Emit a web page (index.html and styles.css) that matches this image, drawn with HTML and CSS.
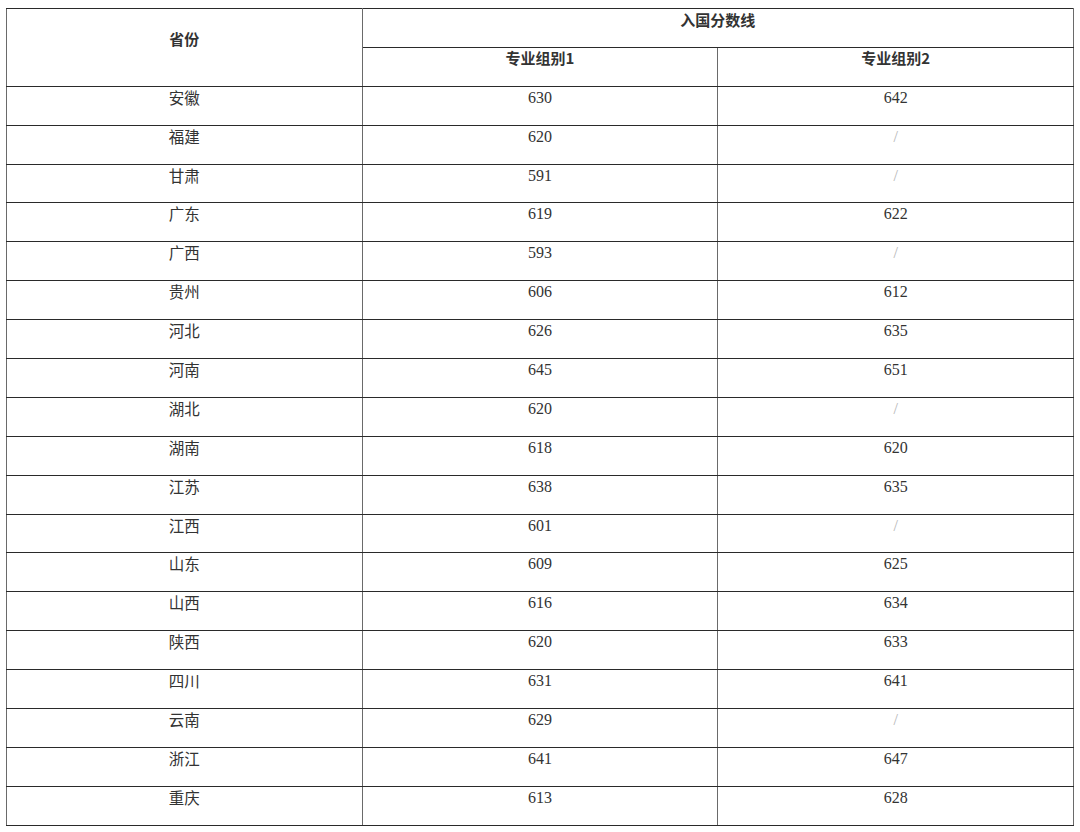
FILE: index.html
```html
<!DOCTYPE html>
<html lang="zh">
<head>
<meta charset="utf-8">
<title>入国分数线</title>
<link rel="stylesheet" href="styles.css">
</head>
<body>
<table class="score-table">
  <colgroup><col class="c1"><col class="c2"><col class="c3"></colgroup>
  <thead>
    <tr>
      <th rowspan="2" class="prov-head"><p>省份</p></th>
      <th colspan="2" class="group-head"><p>入国分数线</p></th>
    </tr>
    <tr>
      <th class="sub-head"><p>专业组别1</p></th>
      <th class="sub-head"><p>专业组别2</p></th>
    </tr>
  </thead>
  <tbody>
    <tr><td class="prov"><p>安徽</p></td><td><p>630</p></td><td><p>642</p></td></tr>
    <tr><td class="prov"><p>福建</p></td><td><p>620</p></td><td><p class="none">/</p></td></tr>
    <tr><td class="prov"><p>甘肃</p></td><td><p>591</p></td><td><p class="none">/</p></td></tr>
    <tr><td class="prov"><p>广东</p></td><td><p>619</p></td><td><p>622</p></td></tr>
    <tr><td class="prov"><p>广西</p></td><td><p>593</p></td><td><p class="none">/</p></td></tr>
    <tr><td class="prov"><p>贵州</p></td><td><p>606</p></td><td><p>612</p></td></tr>
    <tr><td class="prov"><p>河北</p></td><td><p>626</p></td><td><p>635</p></td></tr>
    <tr><td class="prov"><p>河南</p></td><td><p>645</p></td><td><p>651</p></td></tr>
    <tr><td class="prov"><p>湖北</p></td><td><p>620</p></td><td><p class="none">/</p></td></tr>
    <tr><td class="prov"><p>湖南</p></td><td><p>618</p></td><td><p>620</p></td></tr>
    <tr><td class="prov"><p>江苏</p></td><td><p>638</p></td><td><p>635</p></td></tr>
    <tr><td class="prov"><p>江西</p></td><td><p>601</p></td><td><p class="none">/</p></td></tr>
    <tr><td class="prov"><p>山东</p></td><td><p>609</p></td><td><p>625</p></td></tr>
    <tr><td class="prov"><p>山西</p></td><td><p>616</p></td><td><p>634</p></td></tr>
    <tr><td class="prov"><p>陕西</p></td><td><p>620</p></td><td><p>633</p></td></tr>
    <tr><td class="prov"><p>四川</p></td><td><p>631</p></td><td><p>641</p></td></tr>
    <tr><td class="prov"><p>云南</p></td><td><p>629</p></td><td><p class="none">/</p></td></tr>
    <tr><td class="prov"><p>浙江</p></td><td><p>641</p></td><td><p>647</p></td></tr>
    <tr><td class="prov"><p>重庆</p></td><td><p>613</p></td><td><p>628</p></td></tr>
  </tbody>
</table>
</body>
</html>
```

FILE: styles.css
```css
html, body {
  margin: 0;
  padding: 0;
  background: #ffffff;
}

body {
  padding: 8px 0 0 6px;
  font-family: "Liberation Serif", "Noto Sans CJK SC", serif;
  color: #333333;
}

.score-table {
  width: 1068px;
  border-collapse: collapse;
  table-layout: fixed;
  border: 1px solid #111111;
}

.c1, .c2, .c3 {
  width: 33.333%;
}

.score-table th,
.score-table td {
  padding: 0;
  text-align: center;
  vertical-align: top;
  border-top: 1px solid #2a2a2a;
  border-bottom: 1px solid #2a2a2a;
  border-left: 1px solid #6a6a6a;
  border-right: 1px solid #6a6a6a;
}

.score-table p {
  margin: 0;
  padding-bottom: 15.9px;
  line-height: 22px;
  font-size: 16px;
}

.score-table th {
  font-family: "Noto Sans CJK SC", "Liberation Sans", sans-serif;
  font-weight: bold;
  color: #333333;
}

.score-table th p {
  font-size: 15px;
}

.score-table th.group-head p {
  line-height: 21px;
  padding-bottom: 16.9px;
}

.score-table th.sub-head p {
  line-height: 19px;
  padding-bottom: 18.9px;
}

.score-table th.prov-head {
  vertical-align: middle;
}

.score-table th.prov-head p {
  line-height: 22px;
  padding-bottom: 15.9px;
}

.score-table td.prov {
  font-family: "Noto Sans CJK SC", "Liberation Sans", sans-serif;
}

.score-table td.prov p {
  font-size: 15.5px;
  line-height: 20px;
  padding-bottom: 17.9px;
}

.score-table .none {
  color: #b5b5b5;
}
```
